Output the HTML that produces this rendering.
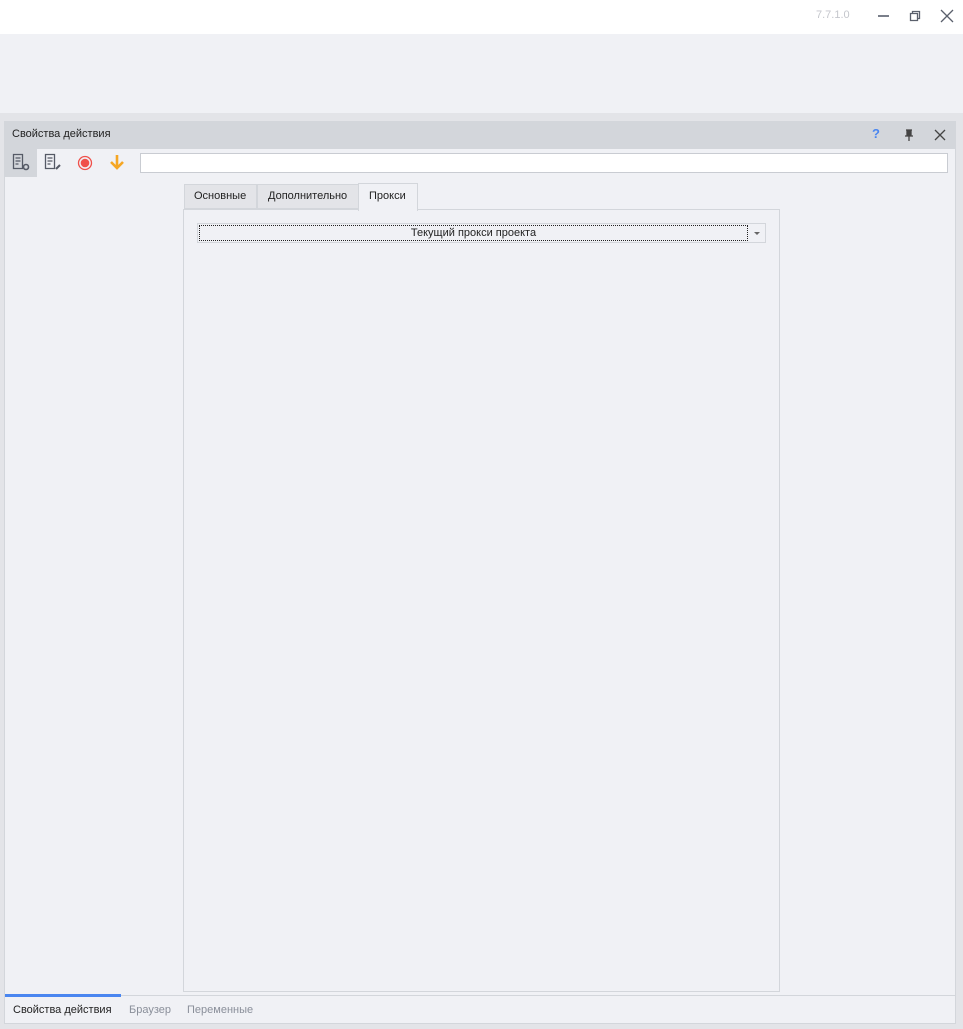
<!DOCTYPE html>
<html><head><meta charset="utf-8"><style>
*{margin:0;padding:0;box-sizing:border-box}
body{width:963px;height:1029px;background:#e3e4e8;font-family:"Liberation Sans",sans-serif;font-size:11px;color:#222;position:relative;overflow:hidden}
.a{position:absolute}
</style></head><body>
<div class="a" style="left:0;top:0;width:963px;height:34px;background:#fff"></div>
<div class="a" style="left:816px;top:9px;color:#c4c6cc;font-size:11px">7.7.1.0</div>
<div class="a" style="left:878px;top:15px;width:11px;height:2px;background:#7a7f8a"></div>
<svg class="a" style="left:908px;top:9px" width="14" height="14"><path d="M2.5 4.5h7v7h-7z M4.5 4.5v-2h7v7h-2" fill="none" stroke="#5a606c" stroke-width="1.3"/></svg>
<svg class="a" style="left:940px;top:9px" width="14" height="14"><path d="M1 1L13 13M13 1L1 13" stroke="#5a606c" stroke-width="1.3"/></svg>
<div class="a" style="left:0;top:34px;width:963px;height:79px;background:#f0f1f5"></div>
<div class="a" style="left:4px;top:121px;width:952px;height:903px;background:#f0f1f5;border:1px solid #d3d6db"></div>
<div class="a" style="left:4px;top:121px;width:952px;height:28px;background:#d3d6db"></div>
<div class="a" style="left:12px;top:128px;color:#222">Свойства действия</div>
<div class="a" style="left:872px;top:126px;color:#4a86f0;font-weight:bold;font-size:13px">?</div>
<svg class="a" style="left:903px;top:129px" width="12" height="12"><path d="M3 1h6M4 1v6h4V1M2 7h8M6 7v5" stroke="#444" stroke-width="1.3" fill="#444"/></svg>
<svg class="a" style="left:934px;top:129px" width="12" height="12"><path d="M1 1L11 11M11 1L1 11" stroke="#444" stroke-width="1.3"/></svg>
<div class="a" style="left:5px;top:149px;width:32px;height:28px;background:#d3d6db"></div>
<svg class="a" style="left:12px;top:153px" width="20" height="20"><path d="M1.5 1.5h9v14h-9z M3.5 5h5M3.5 8h5M3.5 11h3" fill="none" stroke="#555a66" stroke-width="1.3"/><circle cx="14" cy="14" r="2.5" fill="none" stroke="#555a66" stroke-width="1.6"/></svg>
<svg class="a" style="left:44px;top:153px" width="20" height="20"><path d="M1.5 1.5h9v14h-9z M3.5 5h5M3.5 8h5M3.5 11h3" fill="none" stroke="#555a66" stroke-width="1.3"/><path d="M12 16l4-4" stroke="#555a66" stroke-width="2"/></svg>
<svg class="a" style="left:77px;top:155px" width="16" height="16"><circle cx="8" cy="8" r="6.5" fill="none" stroke="#f0504a" stroke-width="1.3"/><circle cx="8" cy="8" r="4.3" fill="#f0504a"/></svg>
<svg class="a" style="left:109px;top:154px" width="16" height="16"><path d="M8 1v12M2 8l6 6 6-6" fill="none" stroke="#f5a623" stroke-width="2.6"/></svg>
<div class="a" style="left:140px;top:153px;width:808px;height:20px;background:#fff;border:1px solid #c9ccd2"></div>
<div class="a" style="left:184px;top:184px;width:73px;height:25px;background:#e3e4e8;border:1px solid #d3d6db"></div>
<div class="a" style="left:194px;top:190px">Основные</div>
<div class="a" style="left:257px;top:184px;width:102px;height:25px;background:#e3e4e8;border:1px solid #d3d6db"></div>
<div class="a" style="left:268px;top:190px">Дополнительно</div>
<div class="a" style="left:183px;top:209px;width:597px;height:783px;border:1px solid #d3d6db"></div>
<div class="a" style="left:358px;top:183px;width:60px;height:28px;background:#f0f1f5;border:1px solid #d3d6db;border-bottom:none"></div>
<div class="a" style="left:369px;top:190px">Прокси</div>
<div class="a" style="left:197px;top:223px;width:569px;height:20px;border:1px solid #d3d6db"></div>
<div class="a" style="left:199px;top:225px;width:549px;height:16px;border:1px dotted #222;text-align:center;line-height:14px">Текущий прокси проекта</div>
<div class="a" style="left:754px;top:232px;width:0;height:0;border-left:3px solid transparent;border-right:3px solid transparent;border-top:3px solid #666"></div>
<div class="a" style="left:5px;top:995px;width:950px;height:1px;background:#d3d6db"></div>
<div class="a" style="left:5px;top:994px;width:116px;height:3px;background:#4a86f0"></div>
<div class="a" style="left:13px;top:1004px;color:#222">Свойства действия</div>
<div class="a" style="left:129px;top:1004px;color:#8a8f9a">Браузер</div>
<div class="a" style="left:187px;top:1004px;color:#8a8f9a">Переменные</div>
</body></html>
